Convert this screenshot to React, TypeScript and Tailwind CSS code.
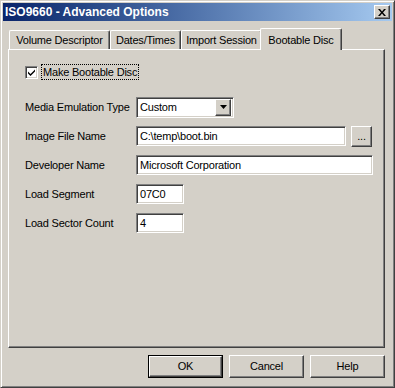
import React from "react";

// win2k bevel helpers
const raised =
  "border border-t-white border-l-white border-b-[#404040] border-r-[#404040] shadow-[inset_-1px_-1px_0_#808080,inset_1px_1px_0_#d4d0c8]";
const sunken =
  "border border-t-[#808080] border-l-[#808080] border-b-white border-r-white shadow-[inset_1px_1px_0_#404040,inset_-1px_-1px_0_#d4d0c8]";

function TextBox({ value, width }: { value: string; width: string }) {
  return (
    <div className={`${sunken} ${width} h-[20px] bg-white flex items-center pl-[3px]`}>
      <span className="leading-none">{value}</span>
    </div>
  );
}

function Tab({ label, width, active }: { label: string; width: string; active?: boolean }) {
  if (active) {
    return (
      <div
        className={`${width} h-[22px] -mb-px ml-[-2px] relative z-10 bg-[#d4d0c8] border-t border-l border-t-white border-l-white border-r border-r-[#404040] shadow-[inset_-1px_0_0_#808080] rounded-t-[2px] flex items-start justify-center pt-[3px]`}
      >
        {label}
      </div>
    );
  }
  return (
    <div
      className={`${width} h-[19px] bg-[#d4d0c8] border-t border-l border-t-white border-l-white border-r border-r-[#404040] shadow-[inset_-1px_0_0_#808080] rounded-t-[2px] flex items-center justify-center pt-[1px]`}
    >
      {label}
    </div>
  );
}

function Row({ label, children }: { label: string; children: React.ReactNode }) {
  return (
    <div className="flex items-center h-[20px]">
      <div className="w-[127px] pl-[16px] shrink-0 whitespace-nowrap">{label}</div>
      {children}
    </div>
  );
}

function PushButton({ label, isDefault }: { label: string; isDefault?: boolean }) {
  return (
    <div className={`w-[75px] h-[23px] ${isDefault ? "border border-black" : ""}`}>
      <div className={`${raised} w-full h-full flex items-center justify-center`}>{label}</div>
    </div>
  );
}

export default function App() {
  return (
    <div className="w-[395px] h-[388px] bg-[#d4d0c8] border border-t-[#d4d0c8] border-l-[#d4d0c8] border-b-[#404040] border-r-[#404040] shadow-[inset_1px_1px_0_white,inset_-1px_-1px_0_#808080] p-[2px] flex flex-col text-[11px] tracking-[-0.2px] text-black font-['Liberation_Sans',Arial,sans-serif] overflow-hidden">
      {/* ================= TITLE BAR ================= */}
      <div className="h-[18px] bg-gradient-to-r from-[#0a246a] to-[#a6caf0] flex items-center pl-[2px] pr-[2px]">
        <span className="text-white font-bold text-[12px] tracking-[0px] leading-none">
          ISO9660 - Advanced Options
        </span>
        <div className={`${raised} ml-auto w-[16px] h-[14px] bg-[#d4d0c8] flex items-center justify-center`}>
          <svg width="8" height="7" viewBox="0 0 8 7">
            <path d="M0 0h2l2 2.5L6 0h2L5 3.5 8 7H6L4 4.5 2 7H0l3-3.5z" fill="black" />
          </svg>
        </div>
      </div>

      {/* ================= TABS ================= */}
      <div className="ml-[5px] w-[377px] mt-[7px] flex flex-col">
        <div className="flex items-end h-[21px] pl-[1px]">
          <Tab label="Volume Descriptor" width="w-[101px]" />
          <Tab label="Dates/Times" width="w-[71px]" />
          <Tab label="Import Session" width="w-[81px]" />
          <Tab label="Bootable Disc" width="w-[82px]" active />
        </div>

        <div className="h-[299px] border border-t-white border-l-white border-b-[#404040] border-r-[#404040] shadow-[inset_-1px_-1px_0_#808080] pt-[14px] flex flex-col">
          {/* checkbox */}
          <div className="flex items-center h-[16px] pl-[16px]">
            <div className={`${sunken} w-[13px] h-[13px] bg-white flex items-center justify-center`}>
              <svg width="7" height="7" viewBox="0 0 7 7">
                <path d="M0 2.5l2.5 2.5L7 0.5v2L2.5 7 0 4.5z" fill="black" />
              </svg>
            </div>
            <div className="ml-[3px] px-[1px] h-[16px] flex items-center border border-dotted border-black">
              Make Bootable Disc
            </div>
          </div>

          <div className="mt-[17px] flex flex-col gap-[9px]">
            <Row label="Media Emulation Type">
              <div className={`${sunken} w-[98px] h-[21px] bg-white flex items-center pl-[3px] pr-[2px]`}>
                <span className="flex-1">Custom</span>
                <div className={`${raised} w-[16px] h-[17px] bg-[#d4d0c8] flex items-center justify-center`}>
                  <svg width="7" height="4" viewBox="0 0 7 4">
                    <path d="M0 0h7L3.5 4z" fill="black" />
                  </svg>
                </div>
              </div>
            </Row>
            <Row label="Image File Name">
              <TextBox value="C:\temp\boot.bin" width="w-[210px]" />
              <div className={`${raised} ml-[5px] w-[21px] h-[21px] flex items-end justify-center pb-[4px] leading-none`}>
                ...
              </div>
            </Row>
            <Row label="Developer Name">
              <TextBox value="Microsoft Corporation" width="w-[237px]" />
            </Row>
            <Row label="Load Segment">
              <TextBox value="07C0" width="w-[48px]" />
            </Row>
            <Row label="Load Sector Count">
              <TextBox value="4" width="w-[48px]" />
            </Row>
          </div>
        </div>
      </div>

      {/* ================= BUTTONS ================= */}
      <div className="mt-[7px] w-[382px] flex justify-end gap-[6px]">
        <PushButton label="OK" isDefault />
        <PushButton label="Cancel" />
        <PushButton label="Help" />
      </div>
    </div>
  );
}
